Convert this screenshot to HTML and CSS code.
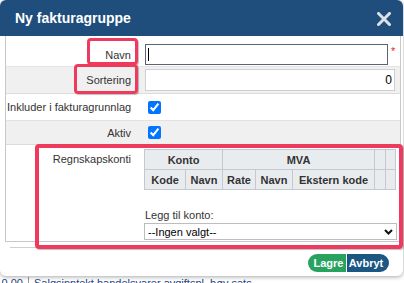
FILE: index.html
```html
<!DOCTYPE html>
<html lang="no">
<head>
<meta charset="utf-8">
<title>Ny fakturagruppe</title>
<link rel="stylesheet" href="styles.css">
</head>
<body>
<div class="dialog">
  <div class="dlg-head">
    <span class="dlg-title">Ny fakturagruppe</span>
    <svg class="close" width="14" height="14" viewBox="0 0 14 14" aria-label="Lukk">
      <path d="M1.5 1.5 L12.5 12.5 M12.5 1.5 L1.5 12.5" stroke="#dde2e8" stroke-width="3" stroke-linecap="square" fill="none"/>
    </svg>
  </div>
  <div class="form">
    <div class="row r1">
      <label class="lbl">Navn</label>
      <div class="val">
        <span class="inp-wrap"><input class="inp inp-focus" type="text"><span class="caret"></span></span>
        <span class="req">*</span>
      </div>
    </div>
    <div class="row r2 alt">
      <label class="lbl">Sortering</label>
      <div class="val"><input class="inp inp-num" type="text" value="0"></div>
    </div>
    <div class="row r3">
      <label class="lbl">Inkluder i fakturagrunnlag</label>
      <div class="val"><input class="chk" type="checkbox" checked></div>
    </div>
    <div class="row r4 alt">
      <label class="lbl">Aktiv</label>
      <div class="val"><input class="chk" type="checkbox" checked></div>
    </div>
    <div class="row r5">
      <label class="lbl lbl-top">Regnskapskonti</label>
      <div class="val val-top">
        <table class="konti">
          <colgroup>
            <col class="c-kode"><col class="c-navn"><col class="c-rate"><col class="c-navn2"><col class="c-ekst"><col class="c-e1"><col class="c-e2">
          </colgroup>
          <tr><th colspan="2">Konto</th><th colspan="3">MVA</th><th></th><th></th></tr>
          <tr><th>Kode</th><th>Navn</th><th>Rate</th><th>Navn</th><th>Ekstern kode</th><th></th><th></th></tr>
        </table>
        <div class="add-label">Legg til konto:</div>
        <div class="sel-wrap">
          <select class="sel"><option>--Ingen valgt--</option></select>
          <svg class="chev" width="9" height="6" viewBox="0 0 9 6"><path d="M1 1 L4.5 4.5 L8 1" stroke="#111" stroke-width="2" fill="none"/></svg>
        </div>
      </div>
    </div>
  </div>
  <div class="dlg-foot">
    <button class="btn btn-save">Lagre</button><button class="btn btn-cancel">Avbryt</button>
  </div>
  <div class="mark m1"></div>
  <div class="mark m2"></div>
  <div class="mark m3"></div>
</div>
<div class="bg-row"><span class="bg-amt">0.00</span><span class="bg-txt">Salgsinntekt handelsvarer avgiftspl. høy sats</span></div>
</body>
</html>
```
FILE: styles.css
```css
* { box-sizing: border-box; }
html, body { margin: 0; padding: 0; }
body {
  background: #fff;
  font-family: "Liberation Sans", Arial, sans-serif;
  overflow: hidden;
  width: 404px;
  height: 283px;
}
.dialog {
  position: relative;
  width: 403px;
  background: #fff;
  border-radius: 6px;
  box-shadow: 0 1px 4px rgba(0, 0, 0, 0.35);
}
.dlg-head {
  height: 36px;
  background: #1f4e7c;
  border-radius: 6px 6px 0 0;
  display: flex;
  align-items: center;
  justify-content: space-between;
  padding: 0 12px 0 15px;
}
.dlg-title {
  color: #fff;
  font-weight: bold;
  font-size: 14px;
}
.close { display: block; margin-top: 2px; }

.form {
  margin-left: 5px;
  width: 396px;
  border: 1px solid #c8c8c8;
  border-top: none;
}
.row {
  display: grid;
  grid-template-columns: 139px 1fr;
  align-items: center;
}
.alt { background: #f0f0f0; }
.r1 { height: 30px; padding: 8px 0 1px; }
.r2 { height: 28px; border-top: 1px solid #e3e3e3; border-bottom: 1px solid #dcdcdc; }
.r3 { height: 26px; }
.r4 { height: 25px; border-top: 1px solid #e3e3e3; border-bottom: 1px solid #dcdcdc; }
.r5 { align-items: start; padding-bottom: 1px; }
.lbl {
  font-size: 11px;
  color: #333;
  text-align: right;
  white-space: nowrap;
  padding: 0 14px 0 1px;
}
.lbl-top { padding-top: 8px; }
.val {
  display: flex;
  align-items: center;
  padding-right: 5px;
}
.val-top { display: block; padding-top: 4px; }
.inp-wrap { position: relative; display: block; }
.inp {
  display: block;
  font-family: "Liberation Sans", Arial, sans-serif;
  font-size: 12px;
  margin: 0;
  background: #fff;
  outline: none;
}
.inp-focus {
  width: 243px;
  height: 21px;
  border: 1px solid #5b6470;
}
.caret {
  position: absolute;
  left: 3px;
  top: 4px;
  width: 1px;
  height: 13px;
  background: #000;
}
.req {
  color: #e8222e;
  font-size: 11px;
  margin-left: 3px;
  align-self: flex-start;
  line-height: 14px;
}
.inp-num {
  width: 250px;
  height: 22px;
  border: 1px solid #cfcfcf;
  text-align: right;
  padding: 0 2px 0 0;
  color: #000;
}
.chk {
  margin: 0 0 0 3px;
  width: 13px;
  height: 13px;
}

.konti {
  border-collapse: collapse;
  table-layout: fixed;
  width: 252px;
  margin-left: -1px;
  background: #e9ecef;
  font-size: 11px;
  color: #333;
}
.konti th {
  border: 1px solid #c5c9ce;
  height: 20px;
  padding: 0;
  text-align: center;
  font-weight: bold;
}
.c-kode { width: 41px; }
.c-navn { width: 37px; }
.c-rate { width: 33px; }
.c-navn2 { width: 37px; }
.c-ekst { width: 82px; }
.c-e1 { width: 11px; }
.c-e2 { width: 10px; }

.add-label {
  font-size: 11px;
  color: #333;
  line-height: 13px;
  margin-top: 19px;
}
.sel-wrap {
  position: relative;
  margin: 1px 0 0 -1px;
  width: 253px;
}
.sel {
  display: block;
  width: 253px;
  height: 17px;
  border: 1px solid #bdbdbd;
  border-radius: 0;
  appearance: none;
  -webkit-appearance: none;
  background: #fff;
  font-family: "Liberation Sans", Arial, sans-serif;
  font-size: 11px;
  color: #000;
  padding: 0 0 0 3px;
  margin: 0;
  outline: none;
}
.chev {
  position: absolute;
  right: 4px;
  top: 6px;
}

.dlg-foot {
  margin: 5px 8px 0 10px;
  border-top: 1px solid #cfcfcf;
  padding: 6px 6px 4px 0;
  display: flex;
  justify-content: flex-end;
}
.btn {
  height: 18px;
  border: none;
  margin: 0;
  color: #fff;
  font-family: "Liberation Sans", Arial, sans-serif;
  font-size: 11px;
  font-weight: bold;
  line-height: 18px;
  cursor: pointer;
}
.btn-save {
  width: 38px;
  background: #28a35f;
  border-radius: 9px 0 0 9px;
  padding: 0 0 0 3px;
  margin-right: 1px;
}
.btn-cancel {
  width: 42px;
  background: #1c5783;
  border-radius: 0 9px 9px 0;
  padding: 0 4px 0 0;
}

.mark {
  position: absolute;
  border: 3px solid #ee3b5d;
  border-radius: 4px;
  box-shadow: 1px 1px 1px rgba(0, 0, 0, 0.25);
}
.m1 { left: 87px; top: 38px; width: 51px; height: 27px; }
.m2 { left: 74px; top: 64px; width: 64px; height: 30px; }
.m3 { left: 35px; top: 144px; width: 368px; height: 105px; border-width: 4px; }

.bg-row {
  display: flex;
  margin-top: 1px;
  font-size: 11px;
  line-height: 13px;
  color: #23457a;
  white-space: nowrap;
}
.bg-amt { padding: 0 5px 0 0; width: 28px; text-align: right; }
.bg-txt { border-left: 1px solid #999; padding-left: 5px; }
```
